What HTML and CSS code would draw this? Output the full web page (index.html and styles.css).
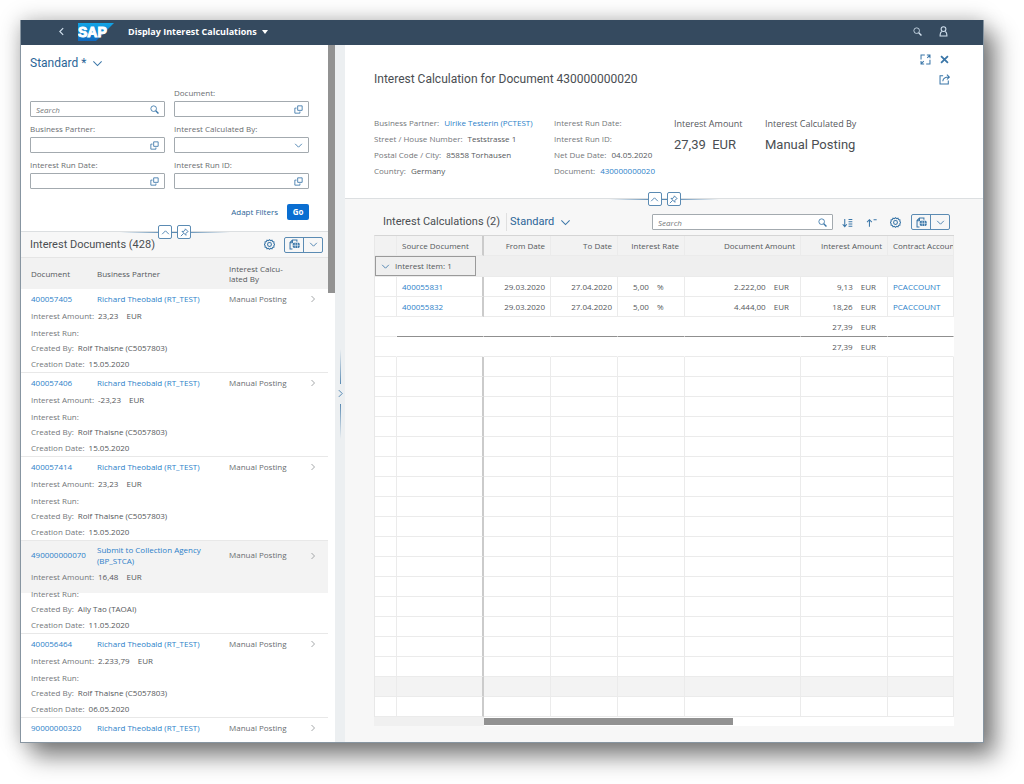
FILE: index.html
```html
<!DOCTYPE html>
<html lang="en">
<head>
  <meta charset="utf-8" />
  <meta name="viewport" content="width=device-width, initial-scale=1.0" />
  <title>Display Interest Calculations</title>
  <link rel="stylesheet" href="styles.css">
</head>
<body>
  <!-- Icon set -->
  <svg class="sprite" aria-hidden="true">
    <symbol id="search" viewBox="0 0 16 16"><circle cx="6.5" cy="6.5" r="5" /><path d="M10.2 10.2 15 15" stroke-width="2.4" /></symbol>
    <symbol id="help" viewBox="0 0 16 16"><path d="M6.5 1.5h8v8h-8z" /><path d="M4.5 5.5h-3v9h9v-3" /></symbol>
    <symbol id="down" viewBox="0 0 16 16"><path d="m2 5 6 6 6-6" /></symbol>
    <symbol id="up" viewBox="0 0 16 16"><path d="m2 11 6-6 6 6" /></symbol>
    <symbol id="left" viewBox="0 0 16 16"><path d="M11 2 5 8l6 6" /></symbol>
    <symbol id="right" viewBox="0 0 16 16"><path d="m5 2 6 6-6 6" /></symbol>
    <symbol id="pin" viewBox="0 0 16 16"><path d="m9.5 1.5 5 5-1.500.5-2.500 2.500v3.500L3.500 6h3.500L9 3.500zM6.500 9.500 1.500 14.500" /></symbol>
    <symbol id="gear" viewBox="0 0 16 16"><path d="M8 1l1.600 1.400 2-.6.9 1.900 2 .6-.2 2.100L15.500 8l-1.200 1.600.2 2.100-2 .6-.9 1.900-2-.6L8 15l-1.600-1.400-2 .6-.9-1.900-2-.6.2-2.100L.5 8l1.200-1.600-.2-2.100 2-.6.9-1.900 2 .6z" /><circle cx="8" cy="8" r="2.800" /></symbol>
    <symbol id="export" viewBox="0 0 16 16"><path d="M5 14.500H1.500V5L5 1.500h6.500V4M1.500 5.500H5v-4" /><rect x="5.500" y="5.500" width="10" height="7.500" rx="2" fill="currentColor" stroke="none" /><path d="M5.500 9.200h10M9 5.500V13M12.300 5.500V13" stroke="#fff" stroke-width=".8" /></symbol>
    <symbol id="person" viewBox="0 0 16 16"><circle cx="8" cy="4.500" r="3.500" /><path d="M5.500 8C3.500 9 3 10.500 3 14.500h10C13 10.500 12.500 9 10.500 8" /></symbol>
    <symbol id="expand" viewBox="0 0 16 16"><path d="M1.500 8V1.500H7M10 1.500h4.500V6M14.500 1.500l-4 4M1.500 10v4.500H6M1.500 14.500l4-4M9 14.500h5.500V8.500" /></symbol>
    <symbol id="close" viewBox="0 0 16 16"><path d="m3 3 10 10M13 3 3 13" stroke-width="2.600" /></symbol>
    <symbol id="share" viewBox="0 0 16 16"><path d="M6 2.500H1.500v12h12V9.500M5.500 10.500C6 6.500 8.500 4.500 14 4.500M11.500 1l3.500 3.500L11.500 8" /></symbol>
    <symbol id="sort" viewBox="0 0 16 16"><path d="M4 3v11M1 10.500l3 3.500 3-3.500M9.500 3.500H15M9.500 6.800H15M9.500 10.100H15M9.500 13.400H15" /></symbol>
    <symbol id="group" viewBox="0 0 16 16"><path d="M5 14V4M1.500 7.500 5 4l3.500 3.500M11 4h4.500" /></symbol>
  </svg>

  <div class="app">
    <!-- Shell header -->
    <header class="shell">
      <button class="icon-btn back" aria-label="Back"><svg class="icon"><use href="#left" /></svg></button>
      <svg class="logo" viewBox="0 0 36 18" role="img" aria-label="SAP">
        <defs><linearGradient id="sapBlue" x1="0" y1="0" x2="0" y2="1"><stop offset="0" stop-color="#12a5e6" /><stop offset="1" stop-color="#1068bd" /></linearGradient></defs>
        <path d="M0 0h36L18 18H0z" fill="url(#sapBlue)" />
        <text x="0" y="14" class="logo-text">SAP</text>
      </svg>
      <button class="shell-title">Display Interest Calculations <span class="caret"></span></button>
      <button class="icon-btn shell-search" aria-label="Search"><svg class="icon"><use href="#search" /></svg></button>
      <button class="icon-btn" aria-label="User"><svg class="icon large"><use href="#person" /></svg></button>
    </header>

    <main class="columns">
      <!-- List -->
      <section class="list-pane">
        <div class="list-body">
          <div class="filter-bar">
            <button class="variant view">Standard * <svg class="icon"><use href="#down" /></svg></button>
            <div class="filters">
              <div class="filter">
                <div class="field"><input type="search" aria-label="Search" placeholder="Search"><svg class="icon"><use href="#search" /></svg></div>
              </div>
              <div class="filter">
                <label for="doc">Document:</label>
                <div class="field"><input type="text" id="doc"><svg class="icon"><use href="#help" /></svg></div>
              </div>
              <div class="filter">
                <label for="partner">Business Partner:</label>
                <div class="field"><input type="text" id="partner"><svg class="icon"><use href="#help" /></svg></div>
              </div>
              <div class="filter">
                <label for="calcBy">Interest Calculated By:</label>
                <div class="field"><select id="calcBy"><option></option></select><svg class="icon"><use href="#down" /></svg></div>
              </div>
              <div class="filter">
                <label for="runDate">Interest Run Date:</label>
                <div class="field"><input type="text" id="runDate"><svg class="icon"><use href="#help" /></svg></div>
              </div>
              <div class="filter">
                <label for="runId">Interest Run ID:</label>
                <div class="field"><input type="text" id="runId"><svg class="icon"><use href="#help" /></svg></div>
              </div>
            </div>
            <div class="filter-actions">
              <button class="text-btn">Adapt Filters</button>
              <button class="go">Go</button>
            </div>
            <div class="toggle">
              <button aria-label="Collapse header"><svg class="icon"><use href="#up" /></svg></button>
              <button aria-label="Pin header"><svg class="icon"><use href="#pin" /></svg></button>
            </div>
          </div>

          <div class="list-toolbar">
            <h2>Interest Documents (428)</h2>
            <button class="icon-btn" aria-label="Settings"><svg class="icon large"><use href="#gear" /></svg></button>
            <div class="split-btn">
              <button aria-label="Export"><svg class="icon large"><use href="#export" /></svg></button>
              <button aria-label="Export options"><svg class="icon"><use href="#down" /></svg></button>
            </div>
          </div>

          <table class="docs">
            <colgroup><col class="c-doc"><col class="c-partner"><col class="c-by"><col></colgroup>
            <thead>
              <tr><th>Document</th><th>Business Partner</th><th>Interest Calcu-<br>lated By</th><th></th></tr>
            </thead>
            <tbody id="docs"></tbody>
          </table>
        </div>
        <div class="scroll-y"><div class="thumb"></div></div>
      </section>

      <div class="splitter">
        <span class="line top"></span>
        <button class="icon-btn" aria-label="Move column"><svg class="icon"><use href="#right" /></svg></button>
        <span class="line bottom"></span>
      </div>

      <!-- Detail -->
      <section class="detail-pane">
        <div class="object-header">
          <div class="window-actions">
            <button class="icon-btn" aria-label="Full screen"><svg class="icon large"><use href="#expand" /></svg></button>
            <button class="icon-btn" aria-label="Close"><svg class="icon large"><use href="#close" /></svg></button>
          </div>
          <div class="title-row">
            <h1>Interest Calculation for Document 430000000020</h1>
            <button class="icon-btn" aria-label="Share"><svg class="icon large"><use href="#share" /></svg></button>
          </div>
          <div class="facets">
            <dl class="facet partner">
              <div><dt>Business Partner:</dt><dd><a href="#">Ulrike Testerin (PCTEST)</a></dd></div>
              <div><dt>Street / House Number:</dt><dd>Teststrasse 1</dd></div>
              <div><dt>Postal Code / City:</dt><dd>85858 Torhausen</dd></div>
              <div><dt>Country:</dt><dd>Germany</dd></div>
            </dl>
            <dl class="facet run">
              <div><dt>Interest Run Date:</dt><dd></dd></div>
              <div><dt>Interest Run ID:</dt><dd></dd></div>
              <div><dt>Net Due Date:</dt><dd>04.05.2020</dd></div>
              <div><dt>Document:</dt><dd><a href="#">430000000020</a></dd></div>
            </dl>
            <dl class="kpi amount"><dt>Interest Amount</dt><dd>27,39 &nbsp;EUR</dd></dl>
            <dl class="kpi"><dt>Interest Calculated By</dt><dd>Manual Posting</dd></dl>
          </div>
          <div class="toggle">
            <button aria-label="Collapse header"><svg class="icon"><use href="#up" /></svg></button>
            <button aria-label="Pin header"><svg class="icon"><use href="#pin" /></svg></button>
          </div>
        </div>

        <div class="calc-section">
          <div class="calc-toolbar">
            <h2>Interest Calculations (2)</h2>
            <button class="variant">Standard <svg class="icon"><use href="#down" /></svg></button>
            <div class="field calc-search"><input type="search" aria-label="Search calculations" placeholder="Search"><svg class="icon"><use href="#search" /></svg></div>
            <button class="icon-btn" aria-label="Sort"><svg class="icon large"><use href="#sort" /></svg></button>
            <button class="icon-btn" aria-label="Group"><svg class="icon large"><use href="#group" /></svg></button>
            <button class="icon-btn" aria-label="Settings"><svg class="icon large"><use href="#gear" /></svg></button>
            <div class="split-btn">
              <button aria-label="Export"><svg class="icon large"><use href="#export" /></svg></button>
              <button aria-label="Export options"><svg class="icon"><use href="#down" /></svg></button>
            </div>
          </div>

          <table class="calc">
            <colgroup>
              <col class="w-sel"><col class="w-source"><col class="w-date"><col class="w-date">
              <col class="w-date"><col class="w-amount"><col class="w-interest"><col>
            </colgroup>
            <thead>
              <tr><th></th><th class="frozen">Source Document</th><th class="num">From Date</th><th class="num">To Date</th><th class="num">Interest Rate</th><th class="num">Document Amount</th><th class="num">Interest Amount</th><th>Contract Account</th></tr>
            </thead>
            <tbody id="calc">
              <tr class="group"><td colspan="8"><button><svg class="icon"><use href="#down" /></svg>Interest Item: 1</button></td></tr>
              <tr><td></td><td class="frozen"><a href="#">400055831</a></td><td class="num">29.03.2020</td><td class="num">27.04.2020</td><td class="rate">5,00 <span class="unit">%</span></td><td class="num cur">2.222,00 <span class="unit">EUR</span></td><td class="num cur">9,13 <span class="unit">EUR</span></td><td><a href="#">PCACCOUNT</a></td></tr>
              <tr><td></td><td class="frozen"><a href="#">400055832</a></td><td class="num">29.03.2020</td><td class="num">27.04.2020</td><td class="rate">5,00 <span class="unit">%</span></td><td class="num cur">4.444,00 <span class="unit">EUR</span></td><td class="num cur">18,26 <span class="unit">EUR</span></td><td><a href="#">PCACCOUNT</a></td></tr>
              <tr class="sum subtotal"><td></td><td></td><td></td><td></td><td></td><td></td><td class="num cur">27,39 <span class="unit">EUR</span></td><td></td></tr>
              <tr class="sum"><td></td><td></td><td></td><td></td><td></td><td></td><td class="num cur">27,39 <span class="unit">EUR</span></td><td></td></tr>
            </tbody>
          </table>
          <div class="scroll-x"><div class="thumb"></div></div>
        </div>
      </section>
    </main>
  </div>

  <script>
    const docs = [
      { id: "400057405", partner: "Richard Theobald (RT_TEST)", amount: "23,23", by: "Rolf Thaisne (C5057803)", date: "15.05.2020" },
      { id: "400057406", partner: "Richard Theobald (RT_TEST)", amount: "-23,23", by: "Rolf Thaisne (C5057803)", date: "15.05.2020" },
      { id: "400057414", partner: "Richard Theobald (RT_TEST)", amount: "23,23", by: "Rolf Thaisne (C5057803)", date: "15.05.2020" },
      { id: "490000000070", partner: "Submit to Collection Agency (BP_STCA)", amount: "16,48", by: "Aily Tao (TAOAI)", date: "11.05.2020", selected: true },
      { id: "400056464", partner: "Richard Theobald (RT_TEST)", amount: "2.233,79", by: "Rolf Thaisne (C5057803)", date: "06.05.2020" },
      { id: "90000000320", partner: "Richard Theobald (RT_TEST)" }
    ];

    // One main row per document, with the remaining fields in a row below it
    document.getElementById("docs").innerHTML = docs.map(d => `
      <tr class="main ${d.selected ? "selected" : ""}">
        <td><a href="#">${d.id}</a></td><td><a href="#">${d.partner}</a></td><td>Manual Posting</td>
        <td class="nav"><svg class="icon"><use href="#right" /></svg></td>
      </tr>` + (d.date ? `
      <tr class="more ${d.selected ? "selected" : ""}"><td colspan="4"><dl>
        <div class="amount"><dt>Interest Amount:</dt><dd>${d.amount} <span class="unit">EUR</span></dd></div>
        <div><dt>Interest Run:</dt><dd></dd></div>
        <div class="created"><dt>Created By:</dt><dd>${d.by}</dd></div>
        <div class="date"><dt>Creation Date:</dt><dd>${d.date}</dd></div>
      </dl></td></tr>` : "")).join("");

    // Fill the visible part of the grid with empty rows
    const emptyRows = 18;
    let rows = "";
    for (let i = 0; i < emptyRows; i++) {
      const cls = i === emptyRows - 2 ? "hover" : "";
      rows += `<tr class="${cls}"><td></td><td class="frozen"></td>${"<td></td>".repeat(6)}</tr>`;
    }
    document.getElementById("calc").insertAdjacentHTML("beforeend", rows);
  </script>
</body>
</html>
```
FILE: styles.css
```css
* {
  box-sizing: border-box;
}
body {
  display: flex;
  height: 100vh;
  margin: 0;
  padding: 20px 40px 41px 20px;
  overflow: hidden;
  background: #fff;
  color: #55585b;
  font-family: "Open Sans", "Noto Sans", sans-serif;
  font-size: 8px;
  line-height: 12px;
}
h1, h2, dl, dd {
  margin: 0;
}
h1, h2 {
  font-family: Roboto, sans-serif;
  font-weight: normal;
  line-height: 16px;
  color: #4a4e52;
}
h1 {
  font-size: 12px;
}
h2 {
  font-size: 11px;
}
a {
  color: #2c7fc9;
  text-decoration: none;
}
button, input, select {
  margin: 0;
  padding: 0;
  border: 0;
  background: none;
  color: inherit;
  font: inherit;
}
button {
  display: inline-flex;
  align-items: center;
  justify-content: center;
  color: #2b6597;
  cursor: pointer;
}

/* Icons */
.sprite {
  position: absolute;
  width: 0;
  height: 0;
}
.icon {
  flex: none;
  width: 9px;
  height: 9px;
  fill: none;
  stroke: currentColor;
  stroke-width: 1.5;
  color: #3a76a8;
}
.icon.large {
  width: 11px;
  height: 11px;
}
.icon-btn {
  width: 16px;
  height: 16px;
}

/* Window */
.app {
  display: flex;
  flex: 1;
  flex-direction: column;
  min-width: 0;
  border: 1px solid #8795a1;
  border-top: 0;
  background: #f7f7f7;
  box-shadow: 12px 14px 22px rgba(0, 0, 0, 0.45), 0 0 20px rgba(0, 0, 0, 0.25);
}
.shell {
  display: flex;
  flex: none;
  align-items: center;
  height: 25px;
  padding: 0 32px 2px;
  background: #354a5f;
}
.shell .icon {
  color: #d3e2f0;
}
.shell .back .icon {
  stroke-width: 2;
}
.logo {
  width: 36px;
  height: 18px;
  margin: 0 14px 0 9px;
}
.logo-text {
  fill: #fff;
  stroke: #fff;
  font: bold 14px "Liberation Sans", sans-serif;
}
.shell-title {
  gap: 5px;
  color: #fff;
  font-size: 9px;
  font-weight: bold;
}
.caret {
  border: 3px solid transparent;
  border-top: 4px solid #fff;
  border-bottom: 0;
}
.shell-search {
  margin: 0 10px 0 auto;
}
.columns {
  display: flex;
  flex: 1;
  min-height: 0;
}

/* List pane */
.list-pane {
  display: flex;
  flex: none;
  width: 314px;
  background: #fff;
}
.list-body {
  flex: 1;
  overflow: hidden;
}
.scroll-y {
  width: 7px;
}
.scroll-y .thumb {
  height: 248px;
  background: #929292;
}
.filter-bar {
  position: relative;
  padding: 9px 19px 11px 9px;
  border-bottom: 1px solid #dcdfe1;
}
.variant {
  gap: 6px;
  font-family: Roboto, sans-serif;
  font-size: 11px;
  line-height: 18px;
}
.variant.view {
  font-size: 12px;
}
.variant .icon {
  width: 11px;
  height: 11px;
}
.filters {
  display: grid;
  grid-template-columns: 1fr 1fr;
  gap: 6px 9px;
  margin-top: 15px;
}
.filter {
  display: flex;
  flex-direction: column;
  justify-content: flex-end;
  height: 30px;
  color: #6a6d70;
}
.filter label {
  line-height: 16px;
}
.field {
  display: flex;
  flex: none;
  align-items: center;
  height: 16px;
  padding: 0 5px;
  border: 1px solid #a3aaaf;
  border-radius: 1px;
  background: #fff;
}
.field input, .field select {
  flex: 1;
  min-width: 0;
  height: 14px;
  outline: 0;
  appearance: none;
}
.field input::placeholder {
  color: #74777a;
  font-style: italic;
}
.filter-actions {
  display: flex;
  justify-content: flex-end;
  gap: 9px;
  margin-top: 15px;
}
.go {
  width: 22px;
  height: 16px;
  border-radius: 2px;
  background: #0a6ed1;
  color: #fff;
  font-weight: bold;
}

/* Collapse and pin buttons on the header edge */
.toggle {
  position: absolute;
  bottom: -8px;
  left: 50%;
  display: flex;
  justify-content: center;
  gap: 5px;
  width: 110px;
  margin-left: -55px;
  background: linear-gradient(90deg, transparent, #5b8bb3 40%, #5b8bb3 60%, transparent) center / 100% 1px no-repeat;
}
.toggle button {
  width: 14px;
  height: 14px;
  border: 1px solid #5b8bb3;
  border-radius: 2px;
  background: #fff;
}
.list-toolbar {
  display: flex;
  align-items: center;
  height: 26px;
  padding: 0 5px 0 9px;
  border-bottom: 1px solid #e5e5e5;
  background: #f7f7f7;
}
.list-toolbar h2 {
  margin-right: auto;
}
.split-btn {
  display: flex;
  width: 39px;
  height: 16px;
  margin-left: 7px;
  border: 1px solid #5b8bb3;
  border-radius: 2px;
}
.split-btn button {
  flex: 1;
}
.split-btn button + button {
  border-left: 1px solid #5b8bb3;
}

/* Documents */
table {
  width: 100%;
  border-collapse: separate;
  border-spacing: 0;
  table-layout: fixed;
}
th, td {
  padding: 0;
  font-weight: normal;
  text-align: left;
}
.c-doc {
  width: 76px;
}
.c-partner {
  width: 132px;
}
.c-by {
  width: 77px;
}
.docs th {
  height: 31px;
  background: #f2f2f2;
  line-height: 10px;
}
.docs th:first-child, .docs .main td:first-child {
  padding-left: 10px;
}
.docs .main td {
  height: 18px;
  color: #6a6d70;
  line-height: 11px;
}
.docs .main.selected td {
  height: 27px;
  padding-right: 16px;
  background: #f3f3f3;
}
.docs .main td:first-child,
.docs .main td:nth-child(3) {
  padding-right: 0;
  white-space: nowrap;
}
.docs .main .nav {
  padding: 2px 0 0 3px;
}
.docs .nav .icon {
  display: block;
  width: 8px;
  height: 8px;
  color: #85898c;
}
.docs .more td {
  padding-left: 10px;
  border-bottom: 1px solid #e8e8e8;
}
.docs .more.selected td {
  background: linear-gradient(#f3f3f3 25px, transparent 25px);
}
.docs dl div {
  display: flex;
  gap: 4px;
  line-height: 16px;
}
.docs dl .amount {
  line-height: 18px;
}
.docs dl .created {
  line-height: 14px;
}
.docs dl .date {
  line-height: 17px;
}
dt {
  color: #74777a;
}
.unit {
  margin-left: 6px;
}

/* Splitter */
.splitter {
  display: flex;
  flex: none;
  flex-direction: column;
  align-items: center;
  justify-content: center;
  gap: 2px;
  width: 10px;
  background: #eceff1;
}
.splitter .line {
  width: 1px;
  height: 35px;
  background: linear-gradient(transparent, #5b8bb3);
}
.splitter .line.bottom {
  background: linear-gradient(#5b8bb3, transparent);
}

/* Detail pane */
.detail-pane {
  flex: 1;
  min-width: 0;
}
.object-header {
  position: relative;
  height: 154px;
  padding: 6px 29px 0 29px;
  border-bottom: 1px solid #dcdfe1;
  background: #fff;
}
.window-actions, .title-row {
  display: flex;
  align-items: center;
  justify-content: flex-end;
  gap: 3px;
}
.window-actions {
  margin-bottom: 4px;
}
.title-row h1 {
  margin-right: auto;
}
.window-actions, .title-row .icon-btn {
  margin-right: 2px;
}
.facets {
  display: flex;
  margin-top: 28px;
}
.facet div {
  display: flex;
  gap: 5px;
  line-height: 16px;
}
.facet.partner {
  width: 180px;
}
.facet.run {
  width: 120px;
}
.kpi.amount {
  width: 91px;
}
.kpi dt {
  color: #55585b;
  font-size: 9px;
  line-height: 18px;
}
.kpi dd {
  margin-top: 2px;
  color: #4a4e52;
  font-family: Roboto, sans-serif;
  font-size: 13px;
  line-height: 20px;
}

/* Calculations */
.calc-section {
  padding: 14px 29px 0 29px;
}
.calc-toolbar {
  display: flex;
  align-items: center;
  height: 18px;
  margin-bottom: 4px;
  padding: 0 4px 0 9px;
}
.calc-toolbar .variant {
  margin-left: 6px;
  padding-left: 3px;
  border-left: 1px solid #e0e0e0;
}
.calc-search {
  width: 181px;
  margin: 0 6px 0 auto;
}
.calc-toolbar .icon-btn {
  margin-right: 8px;
}
.calc-toolbar .icon-btn + .split-btn {
  margin-left: 0;
}
.calc {
  border-top: 1px solid #d5d5d5;
  border-left: 1px solid #e8e8e8;
}
.w-sel {
  width: 22px;
}
.w-source {
  width: 87px;
}
.w-date {
  width: 67px;
}
.w-amount {
  width: 116px;
}
.w-interest {
  width: 87px;
}
.calc th, .calc td {
  height: 20px;
  padding: 0 5px;
  overflow: hidden;
  border-right: 1px solid #ebebeb;
  border-bottom: 1px solid #ebebeb;
  background: #fff;
  white-space: nowrap;
}
.calc th {
  background: #f2f2f2;
}
.calc .frozen {
  border-right: 2px solid #cbcbcb;
}
.calc .num {
  text-align: right;
}
.calc .cur {
  padding-right: 11px;
}
.calc td.rate {
  padding-left: 15px;
}
.calc .group td {
  padding: 0;
  background: #efefef;
}
.calc .group button {
  justify-content: flex-start;
  gap: 5px;
  width: 101px;
  height: 20px;
  padding-left: 5px;
  border: 1px solid #9a9a9a;
  color: #55585b;
  vertical-align: top;
}
.calc .sum td {
  border-right-color: transparent;
}
.calc .subtotal td + td {
  border-bottom-color: #8f8f8f;
}
.calc .hover td {
  background: #f3f3f3;
}
.calc th:last-child, .calc td:last-child {
  padding-right: 0;
}
.scroll-x {
  height: 9px;
  padding: 1px 0 1px 110px;
  background: linear-gradient(90deg, #f0f0f0 110px, #fff 110px);
}
.scroll-x .thumb {
  width: 53%;
  height: 7px;
  background: #929292;
}
```
